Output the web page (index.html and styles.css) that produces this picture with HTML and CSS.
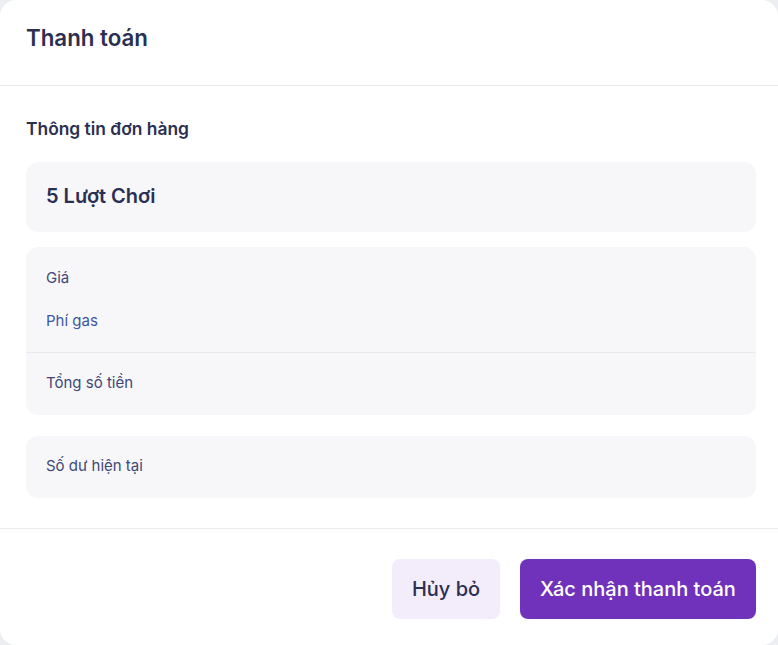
FILE: index.html
```html
<!DOCTYPE html>
<html lang="vi">
<head>
<meta charset="utf-8">
<title>Thanh toán</title>
<link rel="stylesheet" href="styles.css">
</head>
<body>
<div class="modal">
  <header class="modal-header">
    <h1 class="modal-title">Thanh toán</h1>
  </header>
  <section class="modal-body">
    <h2 class="section-title">Thông tin đơn hàng</h2>
    <div class="card product-card">
      <span class="product-name">5 Lượt Chơi</span>
    </div>
    <div class="card price-card">
      <div class="price-rows">
        <div class="row">Giá</div>
        <div class="row row-gas">Phí gas</div>
      </div>
      <div class="price-total">
        <div class="row">Tổng số tiền</div>
      </div>
    </div>
    <div class="card balance-card">
      <div class="row">Số dư hiện tại</div>
    </div>
  </section>
  <footer class="modal-footer">
    <button class="btn btn-cancel">Hủy bỏ</button>
    <button class="btn btn-confirm">Xác nhận thanh toán</button>
  </footer>
</div>
</body>
</html>
```
FILE: styles.css
```css
* { box-sizing: border-box; }
html, body {
  margin: 0;
  padding: 0;
  height: 100%;
}
body {
  background: #eceef2;
  font-family: Inter, "Noto Sans", sans-serif;
  overflow: hidden;
}
.modal {
  width: 778px;
  height: 645px;
  background: #ffffff;
  border-radius: 16px;
  display: flex;
  flex-direction: column;
}
.modal-header {
  height: 86px;
  border-bottom: 1px solid #ebebef;
  padding: 0 22px 10px 26px;
  display: flex;
  align-items: center;
}
.modal-title {
  margin: 0;
  font-size: 22.3px;
  font-weight: 600;
  color: #2b2f52;
  line-height: 28px;
}
.modal-body {
  padding: 31px 22px 30px 26px;
  display: flex;
  flex-direction: column;
  border-bottom: 1px solid #ebebef;
}
.section-title {
  margin: 0 0 21px;
  font-size: 17.4px;
  font-weight: 600;
  line-height: 24px;
  color: #2b2f52;
}
.card {
  background: #f7f7f9;
  border-radius: 12px;
}
.product-card {
  padding: 20px 20px 21px;
  margin-bottom: 15px;
}
.product-name {
  display: block;
  font-size: 20px;
  font-weight: 600;
  line-height: 29px;
  color: #2b2f52;
}
.price-card {
  margin-bottom: 21px;
}
.price-rows {
  padding: 21px 20px 21px;
  display: flex;
  flex-direction: column;
  gap: 23px;
  border-bottom: 1px solid #e9e9f0;
}
.price-total {
  padding: 20px 20px 22px;
}
.row {
  font-size: 15px;
  line-height: 20px;
  color: #3f4778;
}
.row-gas { color: #3d56a0; }
.balance-card {
  padding: 20px 20px 22px;
}
.modal-footer {
  padding: 30px 22px 0 26px;
  display: flex;
  justify-content: flex-end;
  gap: 20px;
}
.btn {
  height: 60px;
  border: none;
  border-radius: 8px;
  font-family: Inter, "Noto Sans", sans-serif;
  font-size: 20px;
  padding: 0;
  white-space: nowrap;
  cursor: pointer;
}
.btn-cancel {
  background: #f3edfb;
  color: #2b2f52;
  font-weight: 500;
  width: 108px;
}
.btn-confirm {
  background: #7032bb;
  color: #ffffff;
  font-weight: 500;
  width: 236px;
}
```
